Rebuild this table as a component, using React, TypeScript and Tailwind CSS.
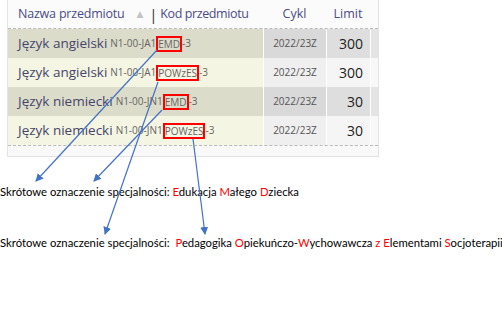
import React from 'react';

type Row = {
  name: string;
  prefix: string;
  tag: string;
  limit: string;
  odd: boolean;
};

const rows: Row[] = [
  { name: 'Język angielski', prefix: 'N1-00-JA1', tag: 'EMD', limit: '300', odd: true },
  { name: 'Język angielski', prefix: 'N1-00-JA1', tag: 'POWzES', limit: '300', odd: false },
  { name: 'Język niemiecki', prefix: 'N1-00-JN1', tag: 'EMD', limit: '30', odd: true },
  { name: 'Język niemiecki', prefix: 'N1-00-JN1', tag: 'POWzES', limit: '30', odd: false },
];

const tableFont = { fontFamily: '"Open Sans", "DejaVu Sans", sans-serif' };
const noteFont = { fontFamily: 'Lato, "Noto Sans", sans-serif' };

const Red: React.FC<{ children: React.ReactNode }> = ({ children }) => (
  <span className="text-[#ff0000]">{children}</span>
);

const Arrows: React.FC = () => (
  <svg className="absolute inset-0 pointer-events-none" width="502" height="334" viewBox="0 0 502 334">
    <defs>
      <marker id="head" markerWidth="8" markerHeight="8" refX="7" refY="4" orient="auto" markerUnits="userSpaceOnUse">
        <path d="M0 0 L8 4 L0 8 Z" fill="#4472c4" />
      </marker>
    </defs>
    <g stroke="#4472c4" strokeWidth="1.2" fill="none">
      <line x1="157" y1="50" x2="36" y2="181" markerEnd="url(#head)" />
      <line x1="162" y1="110" x2="94" y2="181" markerEnd="url(#head)" />
      <line x1="158" y1="82" x2="105" y2="234" markerEnd="url(#head)" />
      <line x1="193" y1="139" x2="205" y2="234" markerEnd="url(#head)" />
    </g>
  </svg>
);

const App: React.FC = () => {
  return (
    <div className="relative w-[502px] h-[334px] bg-white overflow-hidden">
      <div className="ml-[7px] w-[372px] border-x border-b border-[#e3e3e3]" style={tableFont}>
        <div className="grid grid-cols-[255px_63px_44px_1fr] h-[29px] bg-[#fbfbfb] border-b border-dashed border-[#b9b9b9] text-[12.5px] text-[#4b4b88]">
          <div className="flex items-center pl-[10px] whitespace-nowrap tracking-[-0.2px]">
            <span>Nazwa przedmiotu</span>
            <span className="ml-[12px] mr-[6px] text-[9px] text-[#c4c4c4]">▲</span>
            <span className="text-[#333] text-[15px] mr-[3px]">|</span>
            <span className="tracking-[-0.4px]">Kod przedmiotu</span>
          </div>
          <div className="flex items-center justify-center">Cykl</div>
          <div className="flex items-center justify-center">Limit</div>
          <div />
        </div>
        {rows.map((r, i) => (
          <div key={i} className="grid grid-cols-[255px_63px_44px_1fr] h-[29px]">
            <div className={`flex items-center pl-[10px] whitespace-nowrap ${r.odd ? 'bg-[#dcdcca]' : 'bg-[#f4f5e3]'}`}>
              <span className="text-[13.5px] text-[#46466a]">{r.name}</span>
              <span className="ml-[3px] text-[10px] text-[#666] flex items-center">
                {r.prefix}
                <span className="inline-block border-2 border-[#ff0000] leading-[12px]">{r.tag}</span>
                -3
              </span>
            </div>
            <div className={`flex items-center justify-center border-l border-white text-[10px] text-[#555] ${r.odd ? 'bg-[#d9d9d9]' : 'bg-[#efefef]'}`}>
              2022/23Z
            </div>
            <div className={`flex items-center justify-end pr-[7px] border-l border-white text-[14px] text-[#222] ${r.odd ? 'bg-[#dedede]' : 'bg-[#f5f5f5]'}`}>
              {r.limit}
            </div>
            <div className={`border-l border-white ${r.odd ? 'bg-[#e4e4e4]' : 'bg-[#f8f8f8]'}`} />
          </div>
        ))}
        <div className="h-[11px] bg-[#f9f9f9] border-t border-dashed border-[#b9b9b9]" />
      </div>

      <div className="text-[11.3px] text-black leading-[15px]" style={noteFont}>
        <p className="mt-[27px] whitespace-nowrap">
          Skrótowe oznaczenie specjalności: <Red>E</Red>dukacja <Red>M</Red>ałego <Red>D</Red>ziecka
        </p>
        <p className="mt-[36px] whitespace-nowrap">
          Skrótowe oznaczenie specjalności:&nbsp; <Red>P</Red>edagogika <Red>O</Red>piekuńczo-<Red>W</Red>ychowawcza{' '}
          <Red>z</Red> <Red>E</Red>lementami <Red>S</Red>ocjoterapii
        </p>
      </div>

      <Arrows />
    </div>
  );
};

export default App;
